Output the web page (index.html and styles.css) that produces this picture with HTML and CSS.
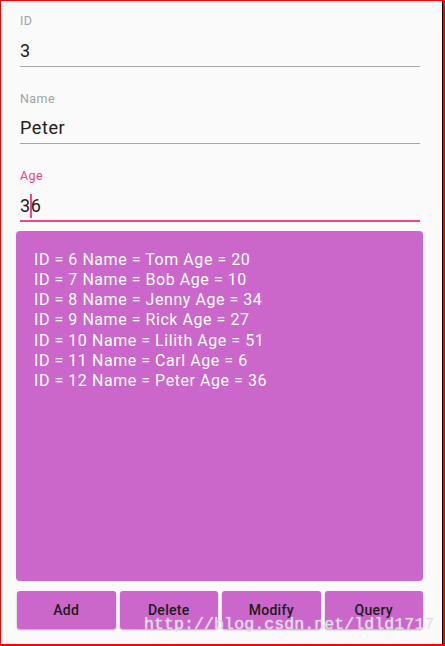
FILE: index.html
```html
<!DOCTYPE html>
<html lang="en">
<head>
    <meta charset="UTF-8">
    <meta name="viewport" content="width=device-width, initial-scale=1.0">
    <title>Person DB</title>
    <link rel="stylesheet" href="styles.css">
</head>
<body>
    <div class="screen">
        <div class="form">
            <div class="field">
                <div class="field-label">ID</div>
                <div class="field-value">3</div>
            </div>
            <div class="field">
                <div class="field-label">Name</div>
                <div class="field-value">Peter</div>
            </div>
            <div class="field focused">
                <div class="field-label">Age</div>
                <div class="field-value">3<span class="caret"></span>6</div>
            </div>
        </div>

        <div class="result">
            <div>ID = 6 Name = Tom Age = 20</div>
            <div>ID = 7 Name = Bob Age = 10</div>
            <div>ID = 8 Name = Jenny Age = 34</div>
            <div>ID = 9 Name = Rick Age = 27</div>
            <div>ID = 10 Name = Lilith Age = 51</div>
            <div>ID = 11 Name = Carl Age = 6</div>
            <div>ID = 12 Name = Peter Age = 36</div>
        </div>

        <div class="actions">
            <button>Add</button>
            <button>Delete</button>
            <button>Modify</button>
            <button>Query</button>
        </div>

        <div class="watermark">http://blog.csdn.net/ldld1717</div>
    </div>
</body>
</html>
```

FILE: styles.css
```css
html, body {
    margin: 0;
    padding: 0;
}
body {
    font-family: Roboto, "Noto Sans", sans-serif;
    background-color: #fafafa;
}
.screen {
    position: relative;
    box-sizing: border-box;
    width: 445px;
    height: 646px;
    border: 1px solid #ff0000;
    border-right-width: 2px;
    border-bottom-width: 2px;
    box-shadow: inset -1px 0 0 #000;
    padding: 12px 0 0 0;
    overflow: hidden;
}
.form {
    display: flex;
    flex-direction: column;
    gap: 24px;
    padding: 0 23px 0 19px;
}
.field-label {
    font-size: 12.5px;
    line-height: 16px;
    letter-spacing: 0.4px;
    color: #a2a2a2;
}
.field-value {
    position: relative;
    margin-top: 9.5px;
    font-size: 18px;
    line-height: 24px;
    letter-spacing: 0.6px;
    color: #212121;
    padding-bottom: 3px;
    border-bottom: 1px solid #a6a6a6;
}
.focused .field-label {
    color: #ff4081;
}
.focused .field-value {
    padding-bottom: 2px;
    border-bottom: 2px solid #ff4081;
}
.caret {
    display: inline-block;
    width: 2px;
    height: 24px;
    margin: 0 -1px 0 -1px;
    background-color: #ff4081;
    vertical-align: -6px;
}
.result {
    margin: 9px 20px 0 15px;
    height: 350px;
    box-sizing: border-box;
    padding: 19px 18px;
    background-color: #cb66cb;
    border-radius: 4px;
    color: #ffffff;
    font-size: 16px;
    line-height: 20.3px;
    letter-spacing: 0.55px;
}
.actions {
    display: flex;
    gap: 4px;
    margin: 10px 20px 0 16px;
}
.actions button {
    flex: 1;
    height: 38px;
    padding: 0;
    border: none;
    border-radius: 3px;
    background-color: #cb66cb;
    color: #1c1c1c;
    font-family: Roboto, "Noto Sans", sans-serif;
    font-size: 14px;
    font-weight: 500;
    letter-spacing: 0.3px;
    box-shadow: 0 1px 2px rgba(0, 0, 0, 0.3);
}
.watermark {
    position: absolute;
    left: 143px;
    top: 614px;
    font-family: "Liberation Mono", monospace;
    font-size: 16.7px;
    line-height: 20px;
    color: rgba(215, 215, 215, 0.75);
    text-shadow: 0 0 1px #ffffff;
    pointer-events: none;
}
```
